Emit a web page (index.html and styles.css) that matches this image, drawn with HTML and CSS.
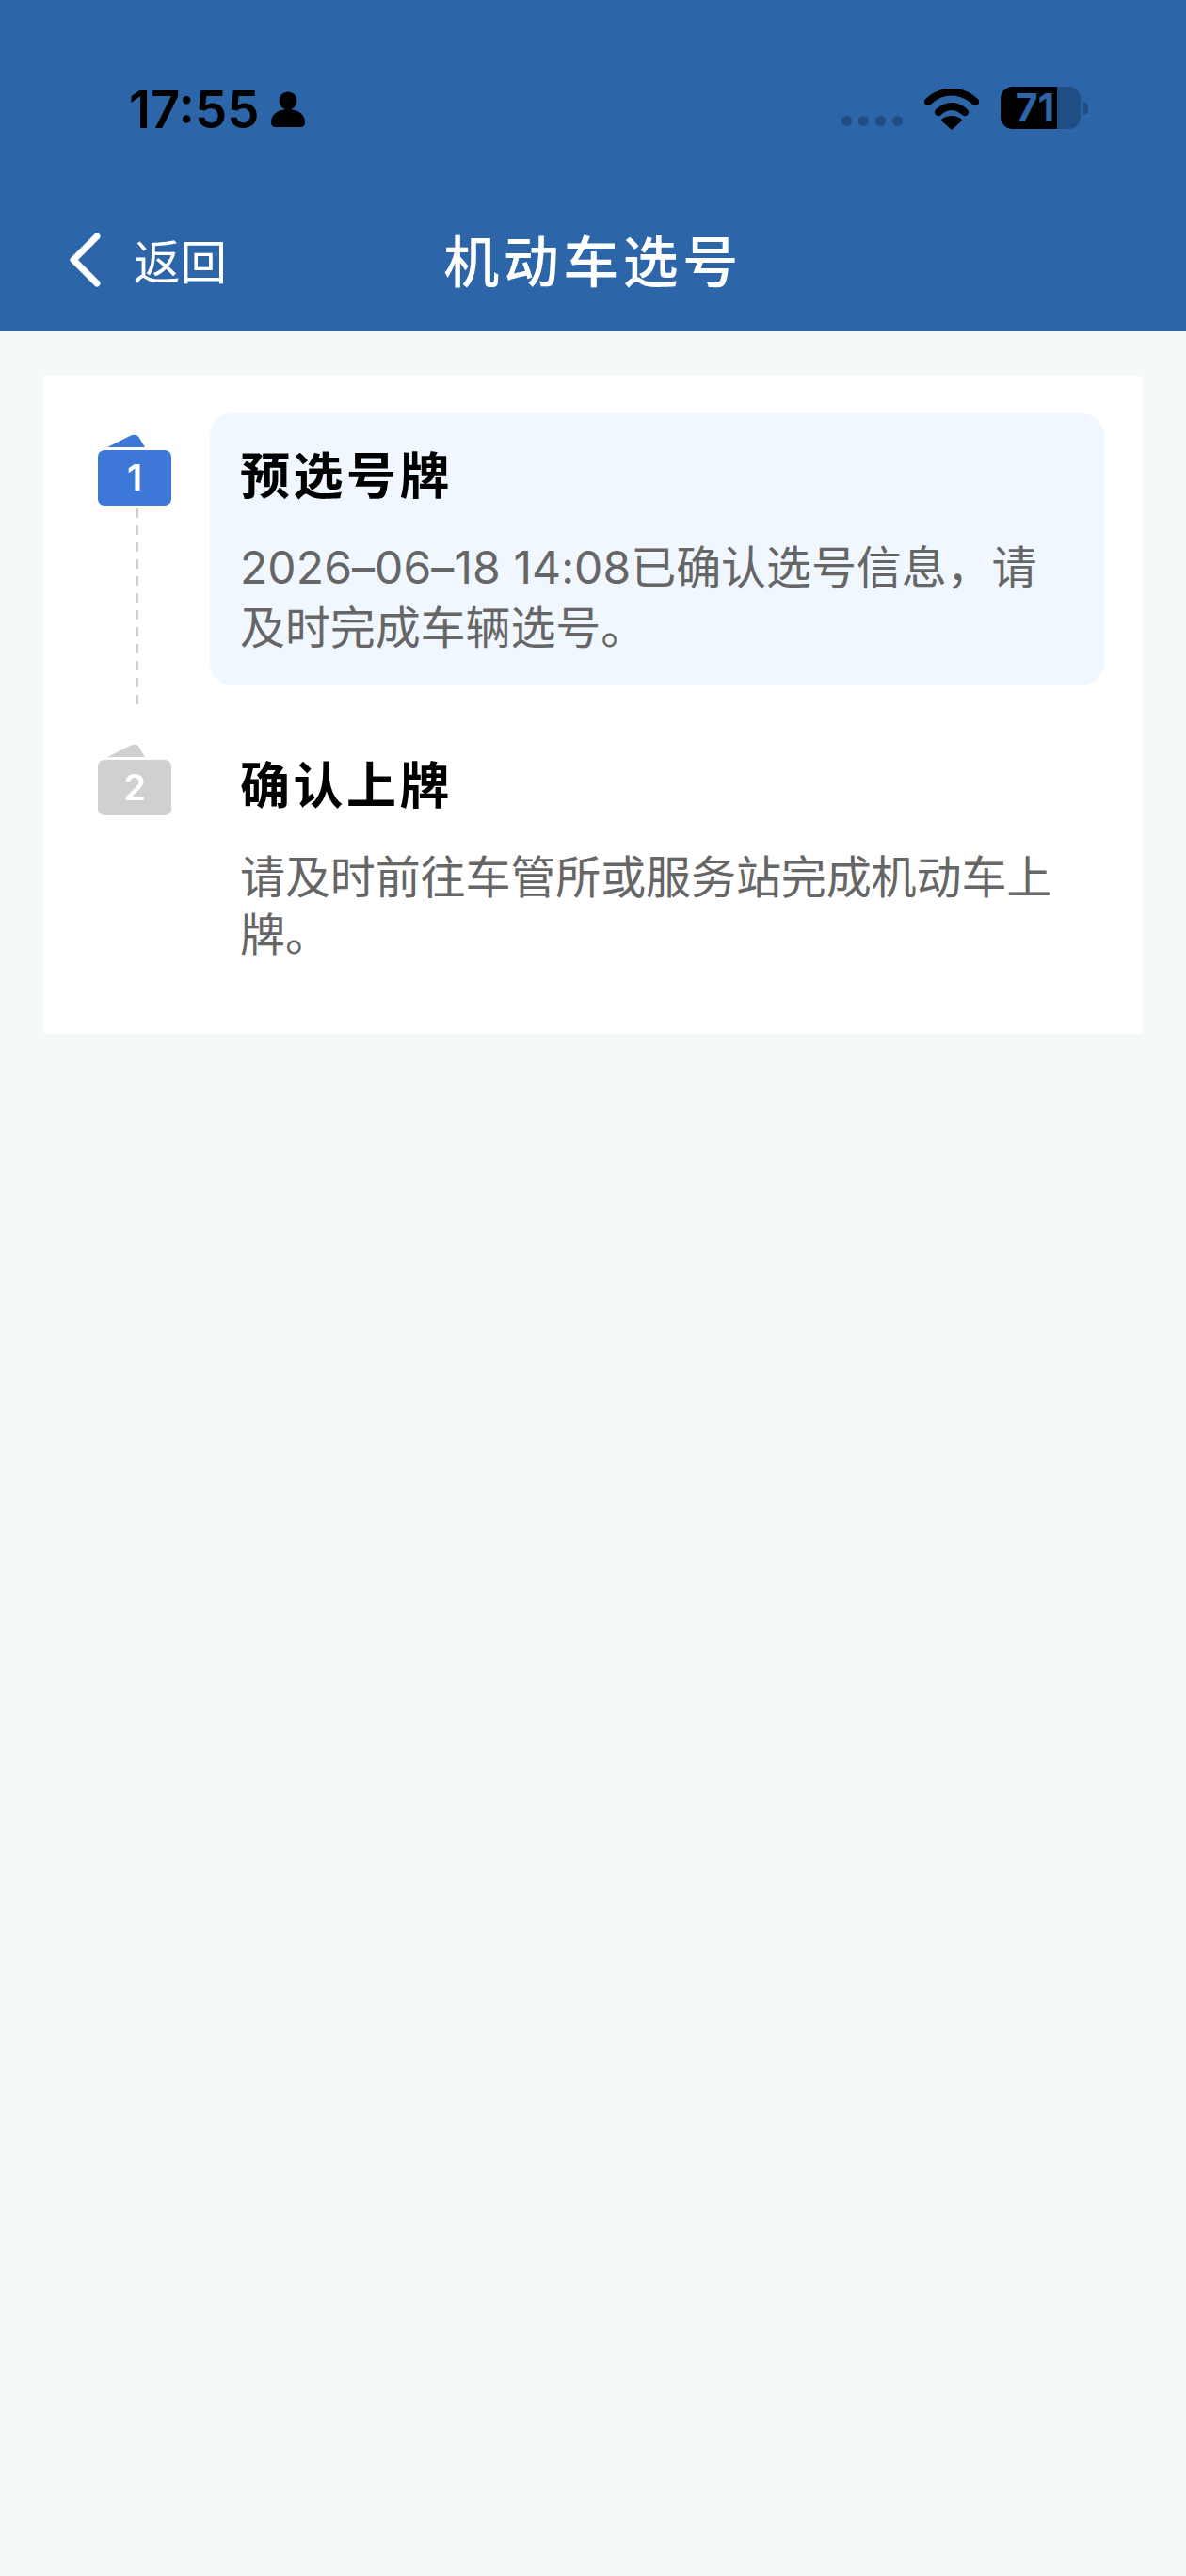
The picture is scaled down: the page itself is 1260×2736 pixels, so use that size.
FILE: index.html
```html
<!DOCTYPE html>
<html lang="zh-CN">
<head>
<meta charset="utf-8">
<title>机动车选号</title>
<link rel="stylesheet" href="styles.css">
</head>
<body>
<header class="header">
  <div class="status">
    <div class="status-left">
      <span class="time">17:55</span>
      <svg class="person" viewBox="0 0 36 38"><circle cx="18" cy="10" r="9.5"/><path d="M0 33c0-9 8-14 18-14s18 5 18 14c0 3-2 5-5 5H5c-3 0-5-2-5-5z"/></svg>
    </div>
    <div class="status-right">
      <div class="dots"><i></i><i></i><i></i><i></i></div>
      <svg class="wifi" viewBox="0 0 58 44"><path d="M4 14C19 0 39 0 54 14" /><path d="M15 25c9-8 19-8 28 0"/><path class="wifi-tip" d="M29 44l-10-9c-1-1-1-2 0-3 6-4 14-4 20 0 1 1 1 2 0 3z"/></svg>
      <div class="battery"><div class="battery-body"><div class="battery-fill"></div><span class="battery-num">71</span></div><div class="battery-cap"></div></div>
    </div>
  </div>
  <div class="nav">
    <div class="back">
      <svg class="chevron" viewBox="0 0 34 58"><path d="M30 4L5 29l25 25"/></svg>
      <span class="back-text">返回</span>
    </div>
    <h1 class="title">机动车选号</h1>
  </div>
</header>
<main class="card">
  <section class="step step-active">
    <div class="rail">
      <div class="badge badge-blue">
        <svg class="badge-tab" viewBox="0 0 40 14"><path d="M0 14L24 2c4-2 8-2 10 2l6 10z"/></svg>
        <span class="badge-box">1</span>
      </div>
      <div class="dash"></div>
    </div>
    <div class="panel panel-active">
      <h2 class="step-title">预选号牌</h2>
      <p class="step-text"><span class="latin">2026–06–18 14:08</span>已确认选号信息，请及时完成车辆选号。</p>
    </div>
  </section>
  <section class="step">
    <div class="rail">
      <div class="badge badge-grey">
        <svg class="badge-tab" viewBox="0 0 40 14"><path d="M0 14L24 2c4-2 8-2 10 2l6 10z"/></svg>
        <span class="badge-box">2</span>
      </div>
    </div>
    <div class="panel">
      <h2 class="step-title">确认上牌</h2>
      <p class="step-text">请及时前往车管所或服务站完成机动车上牌。</p>
    </div>
  </section>
</main>
</body>
</html>
```
FILE: styles.css
```css
* { box-sizing: border-box; }
html, body { margin: 0; padding: 0; }
body {
  width: 1260px;
  height: 2736px;
  background: #f5f9fa;
  font-family: "Noto Sans CJK SC", "Noto Sans", sans-serif;
  overflow: hidden;
}
.header {
  height: 352px;
  background: #2c65a8;
  display: flex;
  flex-direction: column;
}
.status {
  height: 226px;
  padding: 88px 104px 0 137px;
  display: flex;
  justify-content: space-between;
  align-items: flex-start;
}
.status-left { display: flex; align-items: center; gap: 12px; }
.time {
  font-family: Inter, "Liberation Sans", sans-serif;
  font-weight: 600;
  font-size: 54.5px;
  line-height: 56px;
  color: #000;
}
.person { width: 36px; height: 38px; fill: #000; }
.status-right { display: flex; align-items: flex-start; }
.dots { display: flex; gap: 7px; margin-top: 35px; margin-right: 23px; }
.dots i { width: 11px; height: 11px; border-radius: 50%; background: #1f4d84; display: block; }
.wifi { width: 58px; height: 44px; margin-top: 6px; margin-right: 23px; fill: none; stroke: #000; stroke-width: 8; stroke-linecap: round; }
.wifi-tip { fill: #000; stroke: none; }
.battery { display: flex; align-items: center; margin-top: 4px; }
.battery-body {
  position: relative;
  width: 85px;
  height: 45px;
  border-radius: 13px;
  background: #1f4d84;
  display: flex;
  align-items: center;
  justify-content: center;
}
.battery-fill { position: absolute; left: 0; top: 0; bottom: 0; width: 60px; background: #000; border-radius: 13px 0 0 13px; }
.battery-num {
  position: relative;
  font-family: Inter, "Liberation Sans", sans-serif;
  font-weight: 700;
  font-size: 41px;
  line-height: 45px;
  color: #2c65a8;
  margin-left: -12px;
}
.battery-cap { width: 5px; height: 14px; margin-left: 3px; background: #1f4d84; border-radius: 0 7px 7px 0; }
.nav { position: relative; height: 126px; display: flex; align-items: flex-start; justify-content: center; }
.back { position: absolute; left: 73px; top: 21px; display: flex; align-items: center; gap: 35px; }
.chevron { width: 34px; height: 58px; fill: none; stroke: #fff; stroke-width: 7; stroke-linecap: round; stroke-linejoin: round; }
.back-text { font-size: 49.5px; line-height: 58px; color: #fff; }
.title {
  margin: 4px 0 0;
  font-size: 59px;
  line-height: 90px;
  font-weight: 500;
  color: #fff;
  letter-spacing: 4.5px;
}
.card {
  width: 1166px;
  height: 699px;
  margin: 47px 0 0 47px;
  background: #fff;
  padding: 40px 39px 0 57px;
  display: flex;
  flex-direction: column;
  gap: 20px;
}
.step { display: flex; align-items: flex-start; }
.rail { width: 119px; display: flex; flex-direction: column; padding-top: 22px; }
.badge { position: relative; width: 78px; height: 76px; display: flex; align-items: flex-end; }
.badge-tab { position: absolute; left: 10px; top: 0; width: 40px; height: 14px; }
.badge-box {
  width: 78px;
  height: 59px;
  border-radius: 7px;
  color: #fff;
  font-family: Inter, "Noto Sans", sans-serif;
  font-weight: 600;
  font-size: 38px;
  line-height: 59px;
  text-align: center;
}
.badge-blue .badge-box { background: #3d78d8; }
.badge-blue .badge-tab { fill: #3d78d8; }
.badge-grey .badge-box { background: #d0d0d0; }
.badge-grey .badge-tab { fill: #d0d0d0; }
.dash {
  width: 3px;
  height: 208px;
  margin: 3px 0 0 40px;
  background: repeating-linear-gradient(to bottom, #cfcfcf 0, #cfcfcf 10px, transparent 10px, transparent 18px);
}
.panel { width: 950px; border-radius: 24px; padding: 25px 32px 34px; }
.panel-active { background: #f0f7fe; }
.step-title {
  margin: 0 0 29px;
  font-size: 53px;
  line-height: 76px;
  font-weight: 700;
  color: #000;
  letter-spacing: 3.5px;
}
.step-text {
  margin: 0;
  font-size: 48px;
  line-height: 61px;
  color: #666;
  letter-spacing: -0.1px;
}
.latin { font-family: Inter, "Noto Sans", sans-serif; letter-spacing: 0.1px; }
```
